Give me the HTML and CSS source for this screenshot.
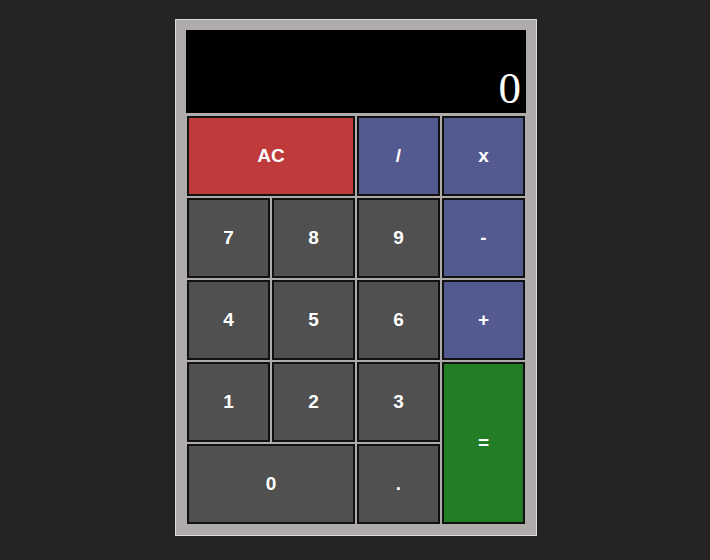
FILE: index.html
```html
<!DOCTYPE html>
<html>
<head>
<meta charset="utf-8">
<link rel="stylesheet" href="styles.css">
</head>
<body>
<div class="page">
  <div class="calc">
    <div class="display">0</div>
    <div class="keys">
      <button class="key red wide">AC</button>
      <button class="key blue">/</button>
      <button class="key blue">x</button>
      <button class="key">7</button>
      <button class="key">8</button>
      <button class="key">9</button>
      <button class="key blue">-</button>
      <button class="key">4</button>
      <button class="key">5</button>
      <button class="key">6</button>
      <button class="key blue">+</button>
      <button class="key">1</button>
      <button class="key">2</button>
      <button class="key">3</button>
      <button class="key green tall">=</button>
      <button class="key wide">0</button>
      <button class="key">.</button>
    </div>
  </div>
</div>
</body>
</html>
```
FILE: styles.css
```css
html, body {
  margin: 0;
  background: #242424;
}
.page {
  display: flex;
  justify-content: center;
  width: 708px;
  padding: 19px 0 0 2px;
}
.calc {
  width: 340px;
  padding: 10px;
  background: #afabaa;
  border: 1px solid #dcdcdc;
}
.display {
  height: 83px;
  margin-bottom: 2px;
  background: #000;
  color: #fff;
  font-family: "Liberation Serif", "Times New Roman", serif;
  font-size: 45px;
  line-height: 1;
  display: flex;
  justify-content: flex-end;
  align-items: flex-end;
  padding: 0 5px 2px 0;
  box-sizing: border-box;
}
.keys {
  display: grid;
  grid-template-columns: repeat(4, 85px);
  grid-auto-rows: 82px;
}
.key {
  margin: 1px;
  border: 2px solid #111;
  background: #505050;
  color: #fff;
  font-family: "Liberation Sans", Arial, sans-serif;
  font-weight: bold;
  font-size: 19px;
  padding: 0;
}
.red { background: #bf3b3b; }
.blue { background: #525a8f; }
.green { background: #237d26; }
.wide { grid-column: span 2; }
.tall { grid-row: span 2; }
```
